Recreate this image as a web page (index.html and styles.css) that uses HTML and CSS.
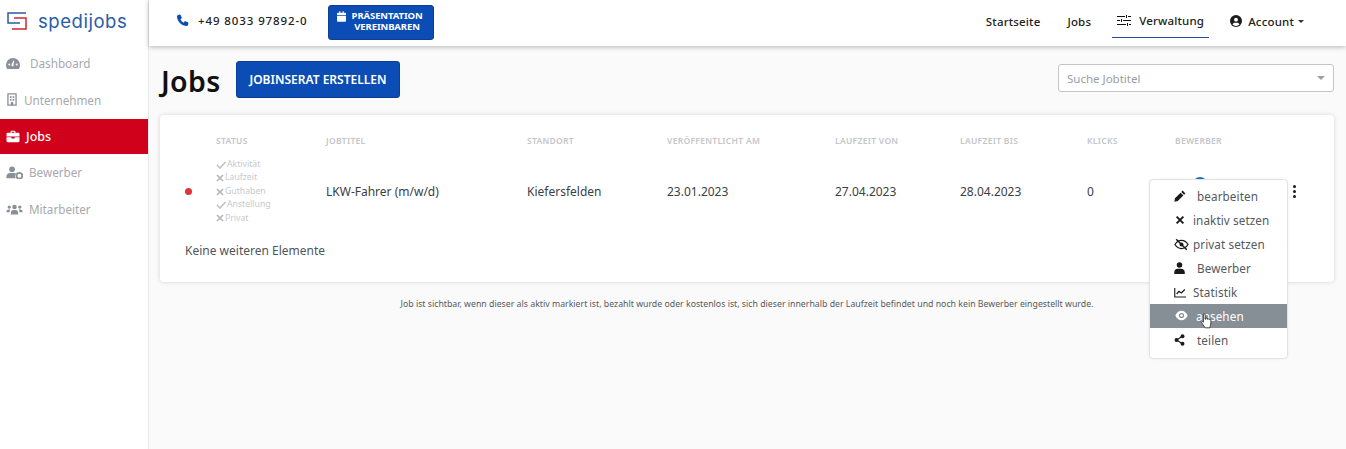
FILE: index.html
```html
<!DOCTYPE html>
<html lang="de">
<head>
<meta charset="utf-8">
<title>Jobs</title>
<link rel="stylesheet" href="styles.css">
</head>
<body>
<div class="app">
  <aside class="sidebar">
    <div class="logo">
      <svg class="logo-mark" viewBox="0 0 20 20" width="20" height="20"><path d="M19 2H1v10h12" fill="none" stroke="#2a5ca8" stroke-width="1.5"/><path d="M7 7h12v11H5" fill="none" stroke="#d0262e" stroke-width="1.5"/></svg>
      <span class="logo-text">spedijobs</span>
    </div>
    <nav class="side-nav">
      <a class="side-item ind-dash"><svg class="side-icon" viewBox="1 2 14 11"><path d="M8 2a7 7 0 0 0-7 7c0 1.400.4 2.700 1 3.700.2.2.4.3.7.3h10.600c.3 0 .5-.1.7-.3.600-1 1-2.300 1-3.700a7 7 0 0 0-7-7zm0 8.500a1.500 1.500 0 0 1-1.200-2.400L8.500 4.500l.7.300-.7 3.800A1.500 1.500 0 0 1 8 10.500zM4.300 9.500a1 1 0 1 1 0-2 1 1 0 0 1 0 2zm7.400 0a1 1 0 1 1 0-2 1 1 0 0 1 0 2z" fill="#8a9097" fill-rule="evenodd"/></svg>Dashboard</a>
      <a class="side-item ind-firm"><svg class="side-icon small" viewBox="0 0 12 16"><path d="M1 1h10v14H1z" fill="none" stroke="#8a9097" stroke-width="1.600"/><path d="M3.500 4h2v2h-2zM6.800 4h2v2h-2zM3.500 7.500h2v2h-2zM6.800 7.500h2v2h-2zM4.500 11h3v4h-3z" fill="#8a9097"/></svg>Unternehmen</a>
      <a class="side-item active"><svg class="side-icon" viewBox="0 0 16 16"><path d="M5 3.500V2.200C5 1.500 5.500 1 6.200 1h3.600c.7 0 1.200.5 1.200 1.200v1.300h3.500c.8 0 1.500.7 1.500 1.500V8H0V5c0-.8.7-1.500 1.500-1.500zm1.300 0h3.400v-1.200H6.300zM0 9h6v1.500h4V9h6v4.500c0 .8-.7 1.500-1.500 1.500h-13C.7 15 0 14.300 0 13.500z" fill="#fff"/></svg>Jobs</a>
      <a class="side-item ind-bew"><svg class="side-icon wide" viewBox="0 0 20 16"><circle cx="7" cy="4" r="3.500" fill="#8a9097"/><path d="M0 15v-2c0-2.500 2-4.500 4.500-4.500h5c1 0 1.800.3 2.500.8A5 5 0 0 0 11.500 15z" fill="#8a9097"/><circle cx="16" cy="12" r="3.500" fill="none" stroke="#8a9097" stroke-width="2.200"/></svg>Bewerber</a>
      <a class="side-item ind-bew"><svg class="side-icon wide" viewBox="0 0 20 16"><circle cx="10" cy="5" r="2.800" fill="#8a9097"/><circle cx="3.500" cy="5" r="2" fill="#8a9097"/><circle cx="16.500" cy="5" r="2" fill="#8a9097"/><path d="M5.500 14v-2c0-2 1.500-3.500 3-3.500h3c1.500 0 3 1.500 3 3.500v2zM0 11.500C0 9.500 1 8 2.500 8h2.200C4 9 4 10.500 4 11.500zM20 11.500C20 9.500 19 8 17.500 8h-2.200c.7 1 .7 2.500.7 3.500z" fill="#8a9097"/></svg>Mitarbeiter</a>
    </nav>
  </aside>
  <div class="content">
    <header class="topbar">
      <div class="top-left">
        <span class="phone"><svg class="phone-icon" viewBox="0 0 16 16" width="12" height="12"><path d="M3.500.8 1 1.500C.4 1.700 0 2.200 0 2.800 0 10.100 5.900 16 13.200 16c.6 0 1.100-.4 1.300-1l.7-2.500c.2-.6-.2-1.200-.8-1.500l-3-1.300c-.5-.2-1.100-.1-1.500.4l-1.100 1.400A11 11 0 0 1 4.500 7.200l1.400-1.100c.5-.4.600-1 .4-1.500L5 1.600C4.700 1 4.100.6 3.500.8z" fill="#0b4db5"/></svg>+49 8033 97892-0</span>
        <a class="btn btn-demo"><svg class="cal" viewBox="0 0 12 14" width="9" height="11"><path d="M3 0h1.500v2h3V0H9v2h1.500c.8 0 1.500.7 1.500 1.500V5H0V3.500C0 2.700.7 2 1.500 2H3zM0 6h12v6.500c0 .8-.7 1.500-1.500 1.500h-9C.7 14 0 13.300 0 12.500z" fill="#fff"/></svg><span>PRÄSENTATION<br>VEREINBAREN</span></a>
      </div>
      <nav class="top-nav">
        <a class="top-link">Startseite</a>
        <a class="top-link">Jobs</a>
        <a class="top-link current"><svg viewBox="0 0 14 11" width="14" height="11"><path d="M0 1.500h8M11 1.500h3M9.500 0v3M0 5.500h3M6 5.500h8M4.500 4v3M0 9.500h9M12 9.500h2M10.500 8v3" fill="none" stroke="#111" stroke-width="1"/></svg>Verwaltung</a>
        <a class="top-link account"><svg viewBox="0 0 16 16" width="12" height="12"><circle cx="8" cy="8" r="8" fill="#1c1c1c"/><circle cx="8" cy="6.200" r="2.600" fill="#fff"/><path d="M3.300 12.700c.6-1.700 2-2.500 3-2.500h3.400c1 0 2.400.8 3 2.500A6.500 6.500 0 0 1 8 14.500a6.500 6.500 0 0 1-4.700-1.800z" fill="#fff"/></svg>Account<i class="caret"></i></a>
      </nav>
    </header>
    <main class="main">
      <div class="title-row">
        <h1>Jobs</h1>
        <a class="btn btn-create">JOBINSERAT ERSTELLEN</a>
        <div class="search"><span>Suche Jobtitel</span><i class="search-caret"></i></div>
      </div>
      <section class="card">
        <div class="job-grid">
          <span></span>
          <span class="th">STATUS</span>
          <span class="th">JOBTITEL</span>
          <span class="th">STANDORT</span>
          <span class="th">VERÖFFENTLICHT AM</span>
          <span class="th">LAUFZEIT VON</span>
          <span class="th">LAUFZEIT BIS</span>
          <span class="th">KLICKS</span>
          <span class="th">BEWERBER</span>
          <span></span>

          <span class="dot"></span>
          <ul class="status">
            <li class="on"><svg viewBox="0 0 10 8"><path d="M1 4l3 3 5.500-6" fill="none" stroke="#bcbfc3" stroke-width="1.500"/></svg>Aktivität</li>
            <li><svg viewBox="0 0 8 8"><path d="M1 1l6 6M7 1L1 7" fill="none" stroke="#b4b7bb" stroke-width="1.700"/></svg>Laufzeit</li>
            <li><svg viewBox="0 0 8 8"><path d="M1 1l6 6M7 1L1 7" fill="none" stroke="#b4b7bb" stroke-width="1.700"/></svg>Guthaben</li>
            <li class="on"><svg viewBox="0 0 10 8"><path d="M1 4l3 3 5.500-6" fill="none" stroke="#bcbfc3" stroke-width="1.500"/></svg>Anstellung</li>
            <li><svg viewBox="0 0 8 8"><path d="M1 1l6 6M7 1L1 7" fill="none" stroke="#b4b7bb" stroke-width="1.700"/></svg>Privat</li>
          </ul>
          <span class="td">LKW-Fahrer (m/w/d)</span>
          <span class="td">Kiefersfelden</span>
          <span class="td">23.01.2023</span>
          <span class="td">27.04.2023</span>
          <span class="td">28.04.2023</span>
          <span class="td">0</span>
          <span class="td"></span>
          <span class="kebab"><i></i><i></i><i></i></span>
        </div>
        <p class="no-more">Keine weiteren Elemente</p>
      </section>
      <p class="hint">Job ist sichtbar, wenn dieser als aktiv markiert ist, bezahlt wurde oder kostenlos ist, sich dieser innerhalb der Laufzeit befindet und noch kein Bewerber eingestellt wurde.</p>
    </main>
  </div>
</div>

<span class="avatar-peek"></span>
<div class="menu">
  <a class="menu-item pad"><svg viewBox="0 0 16 16" width="12" height="12"><path d="M11.500.8l3.700 3.700-1.800 1.800-3.700-3.700zM8.800 3.500l3.700 3.700L5 14.700l-4.500.8.800-4.500z" fill="#1a1a1a"/></svg>bearbeiten</a>
  <a class="menu-item"><svg viewBox="0 0 16 16" width="12" height="12"><path d="M3.500 3.500l9 9M12.500 3.500l-9 9" stroke="#1a1a1a" stroke-width="2.600" fill="none"/></svg>inaktiv setzen</a>
  <a class="menu-item"><svg viewBox="0 0 18 16" width="15" height="13"><path d="M1 8c2-3.200 4.800-5 8-5s6 1.800 8 5c-2 3.200-4.800 5-8 5s-6-1.800-8-5z" fill="none" stroke="#1a1a1a" stroke-width="1.600"/><circle cx="9" cy="8" r="2.400" fill="#1a1a1a"/><path d="M2.500 1.500l13 13" stroke="#1a1a1a" stroke-width="1.800"/></svg>privat setzen</a>
  <a class="menu-item pad"><svg viewBox="0 0 14 16" width="11" height="12"><circle cx="7" cy="4" r="3.700" fill="#1a1a1a"/><path d="M0 16v-2.500C0 11 2 9 4.500 9h5C12 9 14 11 14 13.500V16z" fill="#1a1a1a"/></svg>Bewerber</a>
  <a class="menu-item"><svg viewBox="0 0 16 14" width="12" height="11"><path d="M1 1v12h15" fill="none" stroke="#1a1a1a" stroke-width="1.500"/><path d="M3.500 9l3.200-3.500 3 2L14.500 3" fill="none" stroke="#1a1a1a" stroke-width="1.600"/></svg>Statistik</a>
  <a class="menu-item hover"><svg viewBox="0 0 18 14" width="15" height="11"><path d="M1 7c2-3.700 4.800-6 8-6s6 2.300 8 6c-2 3.700-4.800 6-8 6S3 10.700 1 7z" fill="#fff"/><circle cx="9" cy="7" r="3.300" fill="#868e96"/><circle cx="9" cy="7" r="1.700" fill="#fff"/></svg>ansehen</a>
  <a class="menu-item pad"><svg viewBox="0 0 14 16" width="11" height="12"><path d="M11 3L3 8l8 5" fill="none" stroke="#1a1a1a" stroke-width="1.500"/><circle cx="11" cy="3" r="2.600" fill="#1a1a1a"/><circle cx="3" cy="8" r="2.600" fill="#1a1a1a"/><circle cx="11" cy="13" r="2.600" fill="#1a1a1a"/></svg>teilen</a>
</div>
<svg class="hand" viewBox="0 0 14 18" width="12" height="16"><path d="M4 1.500c0-1 2-1 2 0V7l1-.2V6c0-.8 1.700-.8 1.700 0v1l1-.1c.4-.6 1.600-.4 1.600.4 0 0 1-.4 1.300.5.300 1 0 4.700-.4 6.300-.3 1-.6 2-.6 2.900H6c-.5-1-2-3-3.500-5.300-.8-1.200-1.600-2-1.200-2.700.4-.6 1.300-.3 2.700 1.500z" fill="#fff" stroke="#222" stroke-width=".9"/></svg>
</body>
</html>
```
FILE: styles.css
```css
* { box-sizing: border-box; }
html, body { margin: 0; height: 100%; overflow: hidden; }
body { font-family: "Noto Sans", "Liberation Sans", sans-serif; color: #212529; background: #fafafa; font-size: 13px; }
a { color: inherit; text-decoration: none; }
.app { display: flex; height: 449px; }

.sidebar { width: 149px; flex: none; background: #fff; border-right: 1px solid #e8e8e8; }
.logo { height: 46px; display: flex; align-items: center; padding-left: 7px; gap: 11px; padding-bottom: 5px; }
.logo-mark { flex: none; }
.logo-text { font-family: "Inter", sans-serif; font-size: 18.500px; letter-spacing: .55px; color: #2a5ca8; font-weight: 400; }
.side-nav { display: flex; flex-direction: column; }
.side-item { height: 36.500px; display: flex; align-items: center; padding-left: 6px; color: #a5a9ae; font-size: 11.700px; }
.side-icon { width: 14px; height: 11px; margin-right: 10px; flex: none; }
.side-icon.small { width: 12px; height: 13px; margin-right: 6px; }
.side-icon.wide { width: 17px; height: 13px; margin-right: 6px; }
.side-item.ind-dash { padding-bottom: 2px; }
.side-item.ind-firm { padding-bottom: 2px; }
.side-item:last-child { padding-top: 1px; }
.side-item.active { background: #d0021b; color: #fff; font-weight: 500; height: 35px; font-size: 12.500px; }
.side-item.active .side-icon { margin-right: 6px; width: 14px; height: 13px; }

.content { flex: 1; display: flex; flex-direction: column; min-width: 0; }
.topbar { height: 46px; background: #fff; box-shadow: 0 1px 5px rgba(0,0,0,.28); display: flex; justify-content: space-between; align-items: center; padding: 0 42px 0 28px; position: relative; flex: none; }
.top-left { display: flex; align-items: center; gap: 20px; }
.phone { display: flex; align-items: center; gap: 9px; font-size: 11.500px; font-weight: 500; color: #222; letter-spacing: .9px; margin-bottom: 6px; }
.btn { background: #0b4db5; color: #fff; border-radius: 3px; font-weight: 700; display: flex; align-items: center; justify-content: center; border: 1px solid #0a3f95; }
.btn-demo { width: 106px; height: 35px; margin-bottom: 1px; font-size: 9.500px; line-height: 11px; gap: 6px; text-align: center; letter-spacing: -.1px; justify-content: flex-start; padding: 0 0 4px 8px; }
.btn-demo .cal { align-self: flex-start; margin-top: 5px; }
.top-nav { display: flex; align-items: center; gap: 0; }
.top-link { display: flex; align-items: center; gap: 8px; font-size: 11.500px; font-weight: 500; color: #222; height: 36px; padding: 2px 5px 0; margin-bottom: 6px; margin-left: 16px; letter-spacing: .17px; }
.top-link:nth-child(2) { margin-left: 17px; }
.top-link.current { border-bottom: 1px solid #2a4f9a; margin-left: 16px; }
.top-link.account { gap: 6px; margin-left: 21px; padding: 2px 0 0; }
.caret { width: 0; height: 0; border: 3px solid transparent; border-top-color: #333; border-bottom: 0; margin-left: -2px; }

.main { flex: 1; padding: 15px 12px 0 11px; }
.title-row { display: flex; align-items: center; height: 37px; }
h1 { margin: 0 16px 0 0; font-size: 28.500px; font-weight: 600; color: #111; line-height: 38px; width: 60px; letter-spacing: .3px; padding: 3px 0 0 1px; }
.btn-create { width: 164px; height: 37px; font-size: 12px; font-weight: 600; letter-spacing: 0; }
.search { margin-left: auto; width: 276px; height: 28px; margin-bottom: 3px; background: #fff; border: 1px solid #c4c6c9; border-radius: 3px; display: flex; align-items: center; justify-content: space-between; padding: 0 8px; color: #9a9ea3; font-size: 11.500px; }
.search-caret { width: 0; height: 0; border: 4px solid transparent; border-top-color: #a0a0a0; border-bottom: 0; }

.card { margin-top: 17px; background: #fff; border-radius: 4px; box-shadow: 0 0 4px rgba(0,0,0,.16); height: 167px; padding: 19px 0 0 25px; }
.job-grid { display: grid; grid-template-columns: 31px 110px 201px 140px 168px 125px 127px 88px 118px 1fr; grid-template-rows: 13px auto; row-gap: 11px; align-items: center; }
.th { font-size: 8.500px; font-weight: 600; color: #c3c6c9; letter-spacing: .3px; line-height: 13px; }
.td { font-size: 12px; color: #3b4045; }
.dot { width: 7px; height: 7px; border-radius: 50%; background: #e0333c; }
.status { list-style: none; margin: 0; padding: 0; font-size: 8.700px; color: #c8cacd; line-height: 13.400px; }
.status li { display: flex; align-items: center; }
.status svg { width: 8px; height: 8px; margin-right: 1px; flex: none; }
.status .on svg { width: 10px; margin-right: 1px; }
.kebab { display: flex; flex-direction: column; gap: 2px; }
.kebab i { width: 3px; height: 3px; border-radius: 50%; background: #1a1a1a; }
.no-more { margin: 17px 0 0; font-size: 12px; color: #50555a; }
.hint { margin: 16px 0 0; text-align: center; font-size: 8.750px; color: #565b60; }

.avatar-peek { position: absolute; left: 1193px; top: 177px; width: 14px; height: 14px; border-radius: 50%; background: #2a6bb5; }
.menu { position: absolute; left: 1149px; top: 179px; width: 139px; height: 180px; background: #fff; border: 1px solid #e3e3e3; border-radius: 4px; padding: 5px 0 0; display: flex; flex-direction: column; box-shadow: 0 0 3px rgba(0,0,0,.06); }
.menu-item { height: 23.900px; display: grid; grid-template-columns: 19px 1fr; align-items: center; padding: 0 0 1px 24px; font-size: 11.700px; color: #54595e; letter-spacing: .1px; }
.menu-item.pad { grid-template-columns: 23px 1fr; }
.menu-item.hover { background: #868e96; color: #fff; grid-template-columns: 22px 1fr; }
.hand { position: absolute; left: 1200px; top: 313px; }
```
